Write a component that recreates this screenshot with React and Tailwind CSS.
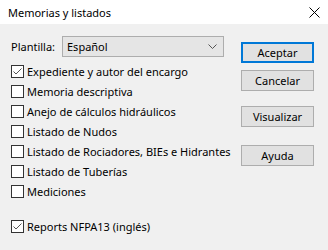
import { useState } from 'react';

const options = [
  { id: 'exp', label: 'Expediente y autor del encargo', checked: true },
  { id: 'mem', label: 'Memoria descriptiva', checked: false },
  { id: 'anejo', label: 'Anejo de cálculos hidráulicos', checked: false },
  { id: 'nudos', label: 'Listado de Nudos', checked: false },
  { id: 'roc', label: 'Listado de Rociadores, BIEs e Hidrantes', checked: false },
  { id: 'tub', label: 'Listado de Tuberías', checked: false },
  { id: 'med', label: 'Mediciones', checked: false },
];

function CheckRow({ label, checked, onToggle, className = '' }) {
  return (
    <div className={`flex items-center h-[20px] cursor-default ${className}`} onClick={onToggle}>
      <span className="w-[13px] h-[13px] border border-[#333333] bg-white flex items-center justify-center shrink-0">
        {checked && (
          <svg width="11" height="11" viewBox="0 0 11 11">
            <path d="M1.5 5.5 L4 8 L9.5 2.5" fill="none" stroke="#555555" strokeWidth="1" />
          </svg>
        )}
      </span>
      <span className="ml-[3px] text-[11px] text-black leading-none whitespace-nowrap">{label}</span>
    </div>
  );
}

function Button({ children, primary, className = '' }) {
  return (
    <button
      className={`w-[73px] h-[21px] bg-[#e1e1e1] text-[11px] text-black leading-none ${primary ? 'border-2 border-[#0078d7]' : 'border border-[#adadad]'} ${className}`}
    >
      {children}
    </button>
  );
}

export default function App() {
  const [items, setItems] = useState(options);
  const [nfpa, setNfpa] = useState(true);

  const toggle = (id) => setItems(items.map((it) => (it.id === id ? { ...it, checked: !it.checked } : it)));

  return (
    <div className="w-[328px] h-[250px] bg-[#f0f0f0] overflow-hidden font-['Noto_Sans','Liberation_Sans',sans-serif]">
      <div className="h-[24px] bg-white flex items-center justify-between pl-[8px] pr-[8px]">
        <span className="text-[11px] text-black leading-none">Memorias y listados</span>
        <svg width="11" height="11" viewBox="0 0 11 11">
          <path d="M0.5 0.5 L10.5 10.5 M10.5 0.5 L0.5 10.5" stroke="#000" strokeWidth="1" />
        </svg>
      </div>

      <div className="flex">
        <div className="w-[241px] pl-[11px] pt-[12px]">
          <div className="flex items-center h-[21px]">
            <span className="w-[51px] text-[11px] text-black leading-none">Plantilla:</span>
            <div className="w-[162px] h-[21px] bg-[#e5e5e5] border border-[#adadad] flex items-center justify-between pl-[4px] pr-[6px]">
              <span className="text-[11px] text-black leading-none">Español</span>
              <svg width="9" height="6" viewBox="0 0 9 6">
                <path d="M0.5 0.5 L4.5 4.5 L8.5 0.5" fill="none" stroke="#555" strokeWidth="1" />
              </svg>
            </div>
          </div>

          <div className="mt-[4px]">
            {items.map((it) => (
              <CheckRow key={it.id} label={it.label} checked={it.checked} onToggle={() => toggle(it.id)} />
            ))}
          </div>

          <CheckRow className="mt-[15px]" label="Reports NFPA13 (inglés)" checked={nfpa} onToggle={() => setNfpa(!nfpa)} />
        </div>

        <div className="flex flex-col pt-[18px]">
          <Button primary>Aceptar</Button>
          <Button className="mt-[7px]">Cancelar</Button>
          <Button className="mt-[15px]">Visualizar</Button>
          <Button className="mt-[18px]">Ayuda</Button>
        </div>
      </div>
    </div>
  );
}
